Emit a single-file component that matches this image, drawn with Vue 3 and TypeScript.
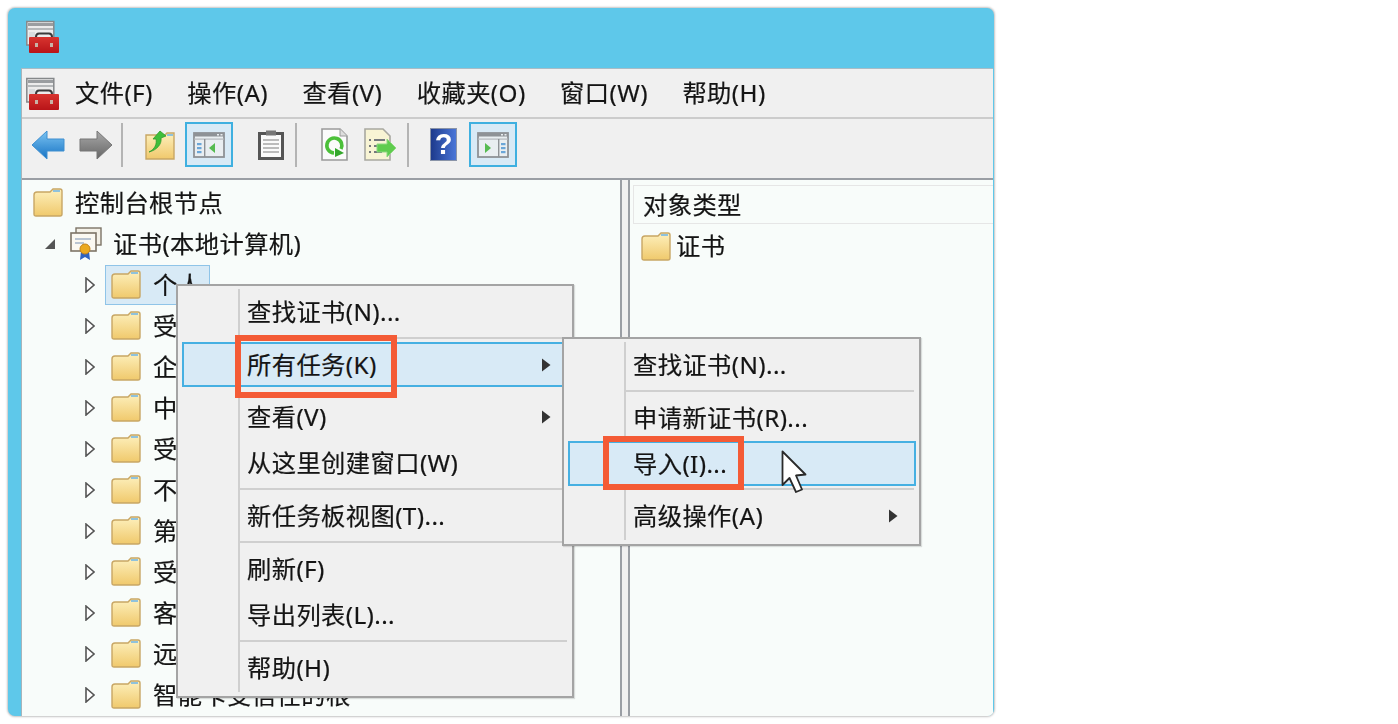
<script setup lang="ts">
interface Row { label: string; selected?: boolean }
interface Entry { label?: string; sep?: boolean; hot?: boolean; arrow?: boolean }

const menus: string[] = ['文件(F)', '操作(A)', '查看(V)', '收藏夹(O)', '窗口(W)', '帮助(H)']

const stores: Row[] = [
  { label: '个人', selected: true },
  { label: '受信任的根证书颁发机构' },
  { label: '企业信任' },
  { label: '中间证书颁发机构' },
  { label: '受信任的发布者' },
  { label: '不信任的证书' },
  { label: '第三方根证书颁发机构' },
  { label: '受信任人' },
  { label: '客户端身份验证颁发者' },
  { label: '远程桌面' },
  { label: '智能卡受信任的根' },
]

const mainMenu: Entry[] = [
  { label: '查找证书(N)...' },
  { sep: true },
  { label: '所有任务(K)', hot: true, arrow: true },
  { label: '查看(V)', arrow: true },
  { label: '从这里创建窗口(W)' },
  { sep: true },
  { label: '新任务板视图(T)...' },
  { sep: true },
  { label: '刷新(F)' },
  { label: '导出列表(L)...' },
  { sep: true },
  { label: '帮助(H)' },
]

const subMenu: Entry[] = [
  { label: '查找证书(N)...' },
  { sep: true },
  { label: '申请新证书(R)...' },
  { label: '导入(I)...', hot: true },
  { sep: true },
  { label: '高级操作(A)', arrow: true },
]
</script>

<template>
  <div class="page">
    <svg class="defs" width="0" height="0" aria-hidden="true">
      <defs>
        <linearGradient id="gFolder" x1="0" y1="0" x2="0" y2="1">
          <stop offset="0" stop-color="#fdf0bd" />
          <stop offset="1" stop-color="#f0c96c" />
        </linearGradient>
        <linearGradient id="gBack" x1="0" y1="0" x2="0" y2="1">
          <stop offset="0" stop-color="#7cc4f2" />
          <stop offset="1" stop-color="#1673c4" />
        </linearGradient>
        <linearGradient id="gForward" x1="0" y1="0" x2="0" y2="1">
          <stop offset="0" stop-color="#a9a9a9" />
          <stop offset="1" stop-color="#666" />
        </linearGradient>
        <linearGradient id="gRed" x1="0" y1="0" x2="0" y2="1">
          <stop offset="0" stop-color="#d8342f" />
          <stop offset="1" stop-color="#b81418" />
        </linearGradient>
        <symbol id="folder" viewBox="0 0 30 29">
          <path d="M1 7 Q1 4 4 4 H17 L20 1 H27 Q29 1 29 3 V26 Q29 28 27 28 H3 Q1 28 1 26 Z" fill="url(#gFolder)" stroke="#c8a664" stroke-width="1.4" />
          <rect x="20" y="2" width="7" height="2" fill="#8fc2dc" />
        </symbol>
        <symbol id="toolbox" viewBox="0 0 33 33">
          <rect x="0.8" y="1.5" width="27" height="23.5" fill="#ececec" stroke="#85888a" stroke-width="1.5" />
          <rect x="2" y="3" width="25" height="3" fill="#9a9da0" />
          <rect x="2" y="8" width="25" height="2" fill="#b5b8ba" />
          <rect x="3" y="12" width="6" height="10" fill="#d8dcde" />
          <path d="M10 17 Q10 13.5 13 13.5 H23 Q26 13.5 26 17" fill="none" stroke="#3a3a3a" stroke-width="2" />
          <rect x="3" y="17" width="30" height="16" rx="1" fill="url(#gRed)" />
          <rect x="9" y="23" width="3" height="4" fill="#c9b2a6" />
          <rect x="24" y="23" width="3" height="4" fill="#c9b2a6" />
        </symbol>
        <symbol id="winLeft" viewBox="0 0 32 26">
          <rect x="1" y="1" width="30" height="24" fill="#e9eef1" stroke="#8e9296" stroke-width="1.8" />
          <rect x="1" y="1" width="30" height="3.5" fill="#8e9296" />
          <rect x="24" y="2" width="2" height="1.5" fill="#e9eef1" />
          <rect x="27.5" y="2" width="2" height="1.5" fill="#e9eef1" />
          <rect x="1" y="6.5" width="30" height="1.2" fill="#b4b8bc" />
          <rect x="11" y="7" width="1.4" height="18" fill="#8e9296" />
          <rect x="4" y="11" width="4.5" height="2.2" fill="#6aa6d8" />
          <rect x="4" y="15" width="4.5" height="2.2" fill="#6aa6d8" />
          <rect x="4" y="19" width="4.5" height="2.2" fill="#6aa6d8" />
          <path d="M22 11 V21 L16 16 Z" fill="#55bb50" />
        </symbol>
        <symbol id="winRight" viewBox="0 0 32 26">
          <rect x="1" y="1" width="30" height="24" fill="#e9eef1" stroke="#8e9296" stroke-width="1.8" />
          <rect x="1" y="1" width="30" height="3.5" fill="#8e9296" />
          <rect x="24" y="2" width="2" height="1.5" fill="#e9eef1" />
          <rect x="27.5" y="2" width="2" height="1.5" fill="#e9eef1" />
          <rect x="1" y="6.5" width="30" height="1.2" fill="#b4b8bc" />
          <rect x="21" y="7" width="1.4" height="18" fill="#8e9296" />
          <rect x="24" y="11" width="4.5" height="2.2" fill="#6aa6d8" />
          <rect x="24" y="15" width="4.5" height="2.2" fill="#6aa6d8" />
          <rect x="24" y="19" width="4.5" height="2.2" fill="#6aa6d8" />
          <path d="M8 11 V21 L14 16 Z" fill="#55bb50" />
        </symbol>
        <symbol id="closedTwist" viewBox="0 0 10 16">
          <path d="M1 1 L9 8 L1 15 Z" fill="#fff" stroke="#555" stroke-width="1.6" />
        </symbol>
        <symbol id="subArrow" viewBox="0 0 10 14">
          <path d="M1 0.5 L9.5 7 L1 13.5 Z" fill="#333" />
        </symbol>
      </defs>
    </svg>

    <div class="window">
      <div class="title">
        <svg class="app-icon" width="33" height="33"><use href="#toolbox" /></svg>
      </div>
      <div class="client">
        <div class="menubar">
          <svg class="app-icon" width="33" height="33"><use href="#toolbox" /></svg>
          <span v-for="m in menus" :key="m" class="menu-name">{{ m }}</span>
        </div>

        <div class="toolbar">
          <svg class="t-back" width="34" height="30" viewBox="0 0 34 30">
            <path d="M1 15 L16 1 V9 H33 V21 H16 V29 Z" fill="url(#gBack)" stroke="#3f8fd0" />
          </svg>
          <svg class="t-forward" width="34" height="30" viewBox="0 0 34 30">
            <path d="M33 15 L18 1 V9 H1 V21 H18 V29 Z" fill="url(#gForward)" stroke="#777" />
          </svg>
          <i class="t-sep s1"></i>
          <svg class="t-up" width="30" height="30" viewBox="0 0 30 30">
            <path d="M1 5 H20 L22 3 H29 V29 H1 Z" fill="url(#gFolder)" stroke="#c8a664" stroke-width="1.4" />
            <rect x="22" y="4" width="6" height="2" fill="#8fc2dc" />
            <path d="M4 22 C10 19 12 14 11 9 L8 9 L15 1 L21 6 L16 8 C17 14 12 20 4 22 Z" fill="#3fbf3a" stroke="#2f9a2c" stroke-width="0.8" />
          </svg>
          <span class="t-btn b1"><svg width="32" height="26"><use href="#winLeft" /></svg></span>
          <svg class="t-clip" width="26" height="30" viewBox="0 0 26 30">
            <rect x="1.5" y="3.5" width="23" height="25" fill="#fafafa" stroke="#555" stroke-width="3" />
            <rect x="8" y="0.5" width="10" height="5" fill="#777" />
            <path d="M5 10 H21 M5 14 H21 M5 18 H21 M5 22 H21" stroke="#bbb" stroke-width="2" />
          </svg>
          <i class="t-sep s2"></i>
          <svg class="t-refresh" width="27" height="33" viewBox="0 0 27 33">
            <path d="M1 1 H19 L26 8 V32 H1 Z" fill="#fbfbfb" stroke="#9a9a9a" stroke-width="1.6" />
            <path d="M19 1 V8 H26" fill="#ddd" stroke="#9a9a9a" />
            <path d="M20 21 A7.5 7.5 0 1 0 13 25" fill="none" stroke="#4cc03a" stroke-width="3.6" />
            <path d="M14 20 L23 25 L14 29 Z" fill="#34a82c" />
          </svg>
          <svg class="t-export" width="33" height="33" viewBox="0 0 33 33">
            <path d="M1 1 H19 L26 8 V32 H1 Z" fill="#f8f4d4" stroke="#a8a8a0" stroke-width="1.6" />
            <path d="M5 12 H7 M10 12 H21 M5 18 H7 M10 18 H18 M5 24 H7 M10 24 H18" stroke="#4a5060" stroke-width="1.6" />
            <path d="M32 20 L23 11 V16 H13 V24 H23 V29 Z" fill="#5fcc4e" stroke="#8ed880" />
          </svg>
          <i class="t-sep s3"></i>
          <span class="t-help">?</span>
          <span class="t-btn b2"><svg width="32" height="26"><use href="#winRight" /></svg></span>
        </div>

        <div class="panes">
          <div class="tree">
            <div class="row lv0">
              <span class="label">
                <svg width="30" height="29"><use href="#folder" /></svg>
                <span class="txt">控制台根节点</span>
              </span>
            </div>
            <div class="row lv1">
              <svg class="twist" width="12" height="12" viewBox="0 0 12 12"><path d="M11 1 V11 H1 Z" fill="#555" /></svg>
              <span class="label">
                <svg class="cert" width="32" height="33" viewBox="0 0 32 33">
                  <rect x="6" y="1" width="25" height="17" fill="#f4f1e8" stroke="#7d7466" stroke-width="1.4" />
                  <rect x="1" y="6" width="25" height="18" fill="#fbf9f2" stroke="#7d7466" stroke-width="1.6" />
                  <path d="M5 12 H21 M5 16 H14" stroke="#a5b4c8" stroke-width="1.5" />
                  <path d="M11 24 L10 33 L15 30 L20 33 L19 24 Z" fill="#2f63c0" />
                  <circle cx="15" cy="22" r="5" fill="#eba91f" stroke="#c4841a" />
                </svg>
                <span class="txt">证书(本地计算机)</span>
              </span>
            </div>
            <div v-for="s in stores" :key="s.label" class="row lv2">
              <svg class="twist" width="10" height="16"><use href="#closedTwist" /></svg>
              <span class="label" :class="{ selected: s.selected }">
                <svg width="30" height="29"><use href="#folder" /></svg>
                <span class="txt">{{ s.label }}</span>
              </span>
            </div>
          </div>

          <div class="list">
            <div class="list-head">对象类型</div>
            <div class="list-row">
              <svg width="30" height="29"><use href="#folder" /></svg>
              <span class="txt">证书</span>
            </div>
          </div>
        </div>
      </div>

      <div class="ctx ctx-main">
        <template v-for="(e, i) in mainMenu" :key="i">
          <div v-if="e.sep" class="sep"></div>
          <div v-else class="item" :class="{ hot: e.hot }">
            <span class="txt">{{ e.label }}</span>
            <svg v-if="e.arrow" class="arrow" width="10" height="14"><use href="#subArrow" /></svg>
          </div>
        </template>
      </div>

      <div class="ctx ctx-sub">
        <template v-for="(e, i) in subMenu" :key="i">
          <div v-if="e.sep" class="sep"></div>
          <div v-else class="item" :class="{ hot: e.hot }">
            <span class="txt">{{ e.label }}</span>
            <svg v-if="e.arrow" class="arrow" width="10" height="14"><use href="#subArrow" /></svg>
          </div>
        </template>
      </div>

      <div class="mark mark-a"></div>
      <div class="mark mark-b"></div>

      <svg class="pointer" width="26" height="44" viewBox="0 0 26 44">
        <path d="M1.5 1.5 V35 L8.5 28 L15 42 L21 39.5 L15 25.5 L24.5 24.5 Z" fill="#fff" stroke="#2a2a2a" stroke-width="1.8" stroke-linejoin="round" />
      </svg>
    </div>
  </div>
</template>

<style>
html, body { margin: 0; background: #fff; }
</style>

<style scoped>
.page {
  width: 1398px;
  height: 724px;
  padding: 8px;
  box-sizing: border-box;
  overflow: hidden;
  background: #fff;
  font-family: "Noto Sans", "Noto Sans CJK SC", sans-serif;
  font-size: 24.3px;
  letter-spacing: 0.4px;
  color: #141414;
  -webkit-text-stroke: 0.2px #141414;
}
.defs { position: absolute; }
.window {
  position: relative;
  width: 986px;
  height: 708px;
  display: flex;
  flex-direction: column;
  background: #5ec8ea;
  border-radius: 7px;
  box-shadow: 0 0 2px 1px #c4c4c4;
  overflow: hidden;
  filter: blur(0.65px);
}
.title {
  height: 60px;
  flex: none;
  display: flex;
  align-items: flex-start;
  padding: 12px 0 0 18px;
  box-sizing: border-box;
}
.client {
  flex: 1;
  min-height: 0;
  margin: 0 1px 0 13px;
  display: flex;
  flex-direction: column;
  background: #f0f0f0;
  border-top: 1px solid #a8bcc6;
  border-left: 1px solid #a8b4ba;
}
.menubar {
  height: 50px;
  flex: none;
  box-sizing: border-box;
  border-bottom: 2px solid #cccccc;
  display: flex;
  align-items: center;
  padding-left: 4px;
  gap: 34.5px;
  white-space: nowrap;
}
.menubar .app-icon { margin-right: -18.5px; margin-top: 1px; }
.menu-name { line-height: 48px; }

.toolbar {
  height: 61px;
  flex: none;
  box-sizing: border-box;
  border-bottom: 2px solid #9a9ea4;
  padding: 0 0 8px 9px;
  display: flex;
  align-items: center;
}
.t-back { flex: none; margin-top: 1px; }
.t-forward { flex: none; margin-left: 14px; margin-top: 1px; }
.t-sep { flex: none; width: 2px; height: 44px; background: #b4b4b4; }
.s1 { margin-left: 8px; }
.t-up { flex: none; margin-left: 22px; }
.t-btn {
  flex: none;
  width: 48px;
  height: 45px;
  box-sizing: border-box;
  border: 2px solid #3fb0e0;
  background: #d8eaf6;
  display: flex;
  align-items: center;
  justify-content: center;
}
.b1 { margin-left: 10px; }
.t-clip { flex: none; margin-left: 25px; }
.s2 { margin-left: 11px; }
.t-refresh { flex: none; margin-left: 24px; }
.t-export { flex: none; margin-left: 16px; }
.s3 { margin-left: 10px; }
.t-help {
  flex: none;
  width: 27px;
  height: 33px;
  margin-left: 21px;
  background: linear-gradient(90deg, #1d3a8c, #4a76d8);
  border: 1px solid #8a94a8;
  box-sizing: border-box;
  color: #fff;
  -webkit-text-stroke: 0;
  letter-spacing: 0;
  font-family: "Liberation Sans", sans-serif;
  font-weight: 700;
  font-size: 29px;
  line-height: 31px;
  text-align: center;
}
.b2 { margin-left: 12px; }

.panes {
  flex: 1;
  min-height: 0;
  display: flex;
  gap: 6px;
}
.tree, .list {
  background: #f8fcfa;
  overflow: hidden;
  box-sizing: border-box;
}
.tree {
  width: 600px;
  flex: none;
  border-right: 2px solid #9a9ea4;
  padding-top: 2px;
}
.list {
  flex: 1;
  border-left: 2px solid #9a9ea4;
  padding: 5px 0 0 3px;
}
.list-head {
  height: 39px;
  box-sizing: border-box;
  border: 1px solid #e6e6e6;
  border-right: none;
  padding-left: 9px;
  line-height: 37px;
}
.list-row {
  display: flex;
  align-items: center;
  gap: 5px;
  height: 44px;
  padding-left: 8px;
}
.txt { margin-bottom: 3px; }
.row {
  height: 41px;
  display: flex;
  align-items: center;
  white-space: nowrap;
}
.label {
  display: flex;
  align-items: center;
  gap: 12px;
  height: 40px;
  box-sizing: border-box;
  padding: 0 7px 0 5px;
  border: 1px solid transparent;
}
.label.selected { background: #d8eaf6; border-color: #8fc4e8; }
.twist { flex: none; }
.lv0 .label { margin-left: 5px; }
.lv1 { padding-left: 22px; }
.lv1 .label { margin-left: 8px; gap: 11px; }
.lv2 { padding-left: 63px; }
.lv2 .label { margin-left: 10px; }

.ctx {
  position: absolute;
  box-sizing: border-box;
  background: #f0f0f0;
  border: 2px solid #a4a4a4;
  padding-top: 3px;
  box-shadow: 1px 1px 1px rgba(0, 0, 0, 0.12);
  white-space: nowrap;
}
.ctx::before {
  content: "";
  position: absolute;
  left: 60px;
  top: 3px;
  bottom: 4px;
  width: 2px;
  background: #cfcfcf;
}
.ctx-main { left: 168px; top: 276px; width: 398px; height: 414px; }
.ctx-sub { left: 554px; top: 329px; width: 359px; height: 209px; }
.item {
  position: relative;
  height: 46px;
  box-sizing: border-box;
  padding-left: 69px;
  display: flex;
  align-items: center;
}
.sep {
  position: relative;
  height: 2px;
  margin: 2px 5px 3px 60px;
  background: #cfcfcf;
}
.hot {
  height: 45px;
  background: #d8eaf6;
  border: 2px solid #46b0e2;
  margin: 2px 0 7px 4px;
  padding-left: 63px;
}
.ctx-sub .hot {
  margin: 0 3px 2px 4px;
  padding-left: 63px;
}
.arrow { position: absolute; left: 363px; top: 50%; margin-top: -7px; }
.ctx-main .hot .arrow { left: 357px; }
.ctx-sub .arrow { left: 324px; }

.mark {
  position: absolute;
  box-sizing: border-box;
  border: 6px solid #f45b36;
}
.mark-a { left: 227px; top: 327px; width: 162px; height: 63px; }
.mark-b { left: 595px; top: 428px; width: 141px; height: 54px; }
.pointer { position: absolute; left: 773px; top: 442px; }
</style>
